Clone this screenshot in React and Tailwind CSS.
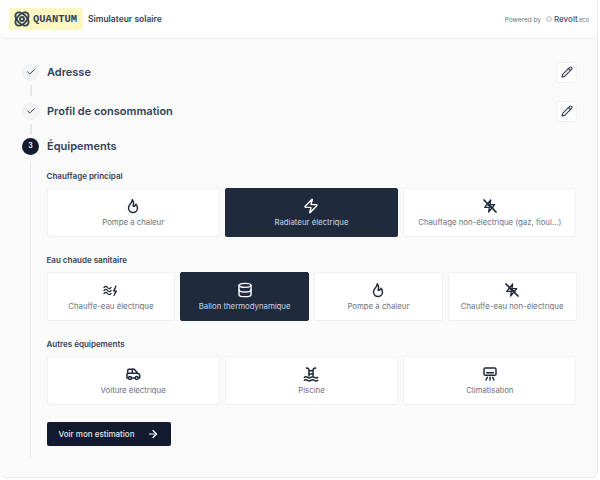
import React from "react";
import { Zap, Database, Pencil, Check, ArrowRight } from "lucide-react";

const S = ({ children }) => (
  <svg width="16" height="16" viewBox="0 0 24 24" fill="none" stroke="currentColor" strokeWidth="2.2" strokeLinecap="round" strokeLinejoin="round">
    {children}
  </svg>
);

const FlameI = () => (
  <svg width="16" height="16" viewBox="3 1.500 18 21.500" fill="none" stroke="currentColor" strokeWidth="2" strokeLinecap="round" strokeLinejoin="round">
    <path d="M12 12c2-2.960 0-7-1-8 0 3.038-1.773 4.741-3 6-1.226 1.260-2 3.240-2 5a6 6 0 1 0 12 0c0-1.532-1.056-3.940-2-5-1.786 3-2.791 3-4 2z" />
  </svg>
);

const ZapCross = () => (
  <S>
    <path d="M13 3 4 14h7l-1 7 9-11h-7z" strokeWidth="2" />
    <path d="M3 3 21 21" strokeWidth="2.6" />
    <path d="M8 9 16 15" strokeWidth="2.6" />
  </S>
);

const WaveZap = () => (
  <svg width="15" height="11" viewBox="0 0 30 22" fill="none" stroke="currentColor" strokeWidth="2.6" strokeLinecap="round" strokeLinejoin="round">
    <path d="M2 5c3-3 5-3 7 0s4 3 7 0" />
    <path d="M2 11c3-3 5-3 7 0s4 3 7 0" />
    <path d="M2 17c3-3 5-3 7 0s4 3 7 0" />
    <path d="M26 2 21 12h6l-5 9" strokeWidth="2.4" fill="currentColor" />
  </svg>
);

const CarI = () => (
  <S>
    <path d="M5 18H3v-6l1-1V7a2 2 0 0 1 2-2h8l5 6 2 1a1 1 0 0 1 1 1v5h-2" />
    <path d="M10 18h5" />
    <path d="M4 11h15" />
    <path d="M11 5v6" />
    <circle cx="7.500" cy="18" r="2.200" />
    <circle cx="17.500" cy="18" r="2.200" />
  </S>
);

const PoolI = () => (
  <S>
    <path d="M5 3c2.500 0 4 1 4 3.500V15" />
    <path d="M19 3c-2.500 0-4 1-4 3.500V15" />
    <path d="M9 7h6" />
    <path d="M9 12h6" />
    <path d="M2 17c2-1.500 3-1.500 5 0s3 1.500 5 0 3-1.500 5 0 3 1.500 5 0" />
    <path d="M2 21.500c2-1.500 3-1.500 5 0s3 1.500 5 0 3-1.500 5 0 3 1.500 5 0" />
  </S>
);

const AcI = () => (
  <S>
    <rect x="3" y="3" width="18" height="11" rx="2" />
    <path d="M7 10h10" />
    <path d="M12 17v4" />
    <path d="M8 17l-2 4" />
    <path d="M16 17l2 4" />
  </S>
);

const Card = ({ icon, label, active }) => (
  <div
    className={`flex h-[49px] flex-col items-center rounded-[2px] border pt-[9px] ${
      active ? "border-[#1e293b] bg-[#1f2a3d] text-white" : "border-[#f0f0f1] bg-white text-[#1e293b]"
    }`}
  >
    <span className="flex h-[16px] items-center justify-center">{icon}</span>
    <span className={`mt-[2px] text-[7.8px] leading-[12px] ${active ? "text-[#cbd5e1]" : "text-[#6b7280]"}`}>{label}</span>
  </div>
);

const Section = ({ title, cols, children }) => (
  <section>
    <h3 className="text-[8px] font-semibold leading-[12px] text-[#374151]">{title}</h3>
    <div className={`mt-[6px] grid gap-[5px] ${cols === 4 ? "grid-cols-4" : "grid-cols-3"}`}>{children}</div>
  </section>
);

const DoneStep = ({ title }) => (
  <div className="flex h-[22px] items-center">
    <span className="flex h-[17px] w-[17px] items-center justify-center rounded-full border border-[#eeeff1] bg-[#f3f4f6] text-[#1e293b]">
      <Check size={10} strokeWidth={2.2} />
    </span>
    <span className="ml-[8px] flex-1 text-[11px] font-semibold leading-[16px] text-[#334155]">{title}</span>
    <button className="flex h-[21px] w-[21px] items-center justify-center rounded-[3px] border border-[#f0f0f1] bg-white text-[#334155]">
      <Pencil size={12} strokeWidth={2.3} />
    </button>
  </div>
);

const Connector = () => <div className="ml-[8px] h-[11px] w-[1.5px] bg-[#e5e7eb]" />;

export default function App() {
  const ic = { size: 16, strokeWidth: 2.1 };
  return (
    <div className="h-[480px] w-[600px] overflow-hidden bg-white font-['Inter',sans-serif]">
      <div className="h-[478px] w-[598px] rounded-b-[6px] border-b border-r border-[#ececec] bg-[#fafafa]">
        <header className="flex h-[39px] items-center justify-between rounded-b-[6px] border-b border-[#eeeeee] bg-white pl-[9px] pr-[8px] shadow-[0_1px_2px_rgba(0,0,0,0.02)]">
          <div className="flex items-center">
            <div className="flex h-[22px] w-[74px] items-center gap-[3px] rounded-[2px] bg-[#fdf7c3] pl-[5px]">
              <svg width="16" height="16" viewBox="0 0 24 24" fill="none" stroke="#334155" strokeWidth="2.8">
                <circle cx="12" cy="12" r="3" />
                <ellipse cx="12" cy="12" rx="12" ry="7" transform="rotate(45 12 12)" />
                <ellipse cx="12" cy="12" rx="12" ry="7" transform="rotate(-45 12 12)" />
              </svg>
              <span className="font-['Liberation_Mono',monospace] text-[10.5px] font-bold leading-none text-[#334155]">QUANTUM</span>
            </div>
            <span className="ml-[5px] text-[8.5px] font-semibold leading-[12px] text-[#374151]">Simulateur solaire</span>
          </div>
          <div className="flex items-baseline">
            <span className="text-[6.5px] leading-none text-[#6b7280]">Powered by</span>
            <svg className="ml-[5px] self-center" width="6" height="6" viewBox="0 0 6 6" fill="none" stroke="#9ca3af" strokeWidth="0.8"><circle cx="3" cy="3" r="2.300" /></svg>
            <span className="ml-[2px] text-[8px] font-medium leading-none text-[#4b5563]">Revolt</span>
            <span className="text-[5.5px] leading-none text-[#6b7280]">.eco</span>
          </div>
        </header>

        <main className="pl-[22px] pr-[20px] pt-[22px]">
          <DoneStep title="Adresse" />
          <div className="my-[2px]"><Connector /></div>
          <div className="mt-[4px]"><DoneStep title="Profil de consommation" /></div>
          <div className="mt-[2px]"><Connector /></div>
          <div className="mt-[2px] flex h-[18px] items-center">
            <span className="flex h-[17px] w-[17px] items-center justify-center rounded-full bg-[#111a2e] text-[7px] font-semibold text-white">3</span>
            <span className="ml-[8px] text-[11px] font-semibold leading-[16px] text-[#334155]">Équipements</span>
          </div>
          <div className="ml-[8px] mt-[6px] h-[297px] border-l-[1.5px] border-[#e5e7eb] pl-[15.5px] pt-[9px]">
            <div className="flex w-[530px] flex-col gap-[17px]">
              <Section title="Chauffage principal">
                <Card icon={<FlameI />} label="Pompe à chaleur" />
                <Card active icon={<Zap {...ic} />} label="Radiateur électrique" />
                <Card icon={<ZapCross />} label="Chauffage non-électrique (gaz, fioul...)" />
              </Section>
              <Section title="Eau chaude sanitaire" cols={4}>
                <Card icon={<WaveZap />} label="Chauffe-eau électrique" />
                <Card active icon={<Database {...ic} />} label="Ballon thermodynamique" />
                <Card icon={<FlameI />} label="Pompe à chaleur" />
                <Card icon={<ZapCross />} label="Chauffe-eau non-électrique" />
              </Section>
              <Section title="Autres équipements">
                <Card icon={<CarI />} label="Voiture électrique" />
                <Card icon={<PoolI />} label="Piscine" />
                <Card icon={<AcI />} label="Climatisation" />
              </Section>
            </div>
            <button className="mt-[17px] flex h-[24px] w-[124px] items-center gap-[13px] rounded-[2px] bg-[#111a2e] pl-[12px] text-[8px] font-medium text-[#e5e7eb]">
              Voir mon estimation
              <ArrowRight size={12} strokeWidth={2.4} className="text-white" />
            </button>
          </div>
        </main>
      </div>
    </div>
  );
}
